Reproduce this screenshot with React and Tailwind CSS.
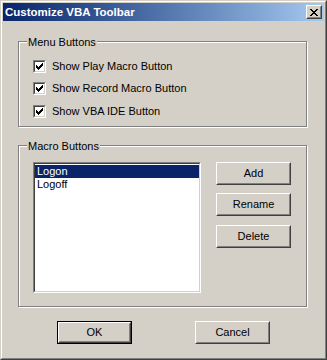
const FONT = { fontFamily: '"Liberation Sans", Arial, sans-serif' };

const CHECK = [[6], [5, 6], [0, 4, 5, 6], [0, 1, 3, 4, 5], [0, 1, 2, 3, 4], [1, 2, 3], [2]];
const CLOSE = [[0, 1, 6, 7], [1, 2, 5, 6], [2, 3, 4, 5], [3, 4], [2, 3, 4, 5], [1, 2, 5, 6], [0, 1, 6, 7]];

function Pixels({ rows, w, h }) {
  return (
    <svg width={w} height={h} viewBox={`0 0 ${w} ${h}`} shapeRendering="crispEdges">
      {rows.map((cols, y) =>
        cols.map((x) => <rect key={`${x}-${y}`} x={x} y={y} width="1" height="1" fill="#000" />)
      )}
    </svg>
  );
}

function Checkbox({ label }) {
  return (
    <div className="flex items-center h-[13px]">
      <div className="w-[13px] h-[13px] border border-t-[#808080] border-l-[#808080] border-r-white border-b-white">
        <div className="w-full h-full bg-white border border-t-[#404040] border-l-[#404040] border-r-[#d4d0c8] border-b-[#d4d0c8] flex items-center justify-center">
          <Pixels rows={CHECK} w={7} h={7} />
        </div>
      </div>
      <span className="ml-[6px] text-[11px] leading-[13px] text-black whitespace-nowrap">{label}</span>
    </div>
  );
}

function Button({ children, isDefault }) {
  return (
    <div className={`w-[75px] h-[23px] ${isDefault ? 'border border-black' : ''}`}>
      <div className="w-full h-full border border-t-white border-l-white border-r-[#404040] border-b-[#404040]">
        <div className="w-full h-full border border-t-[#d4d0c8] border-l-[#d4d0c8] border-r-[#808080] border-b-[#808080] flex items-center justify-center text-[11px] leading-[13px] text-black">
          {children}
        </div>
      </div>
    </div>
  );
}

function GroupBox({ title, className, children }) {
  return (
    <div className={`relative w-[289px] border border-[#808080] shadow-[inset_1px_1px_0_#fff,1px_1px_0_#fff] ${className}`}>
      <span className="absolute left-[8px] top-[-6px] px-[1px] bg-[#d4d0c8] text-[11px] leading-[13px] text-black whitespace-nowrap">
        {title}
      </span>
      {children}
    </div>
  );
}

export default function App() {
  const macros = ['Logon', 'Logoff'];

  return (
    <div
      className="w-[327px] h-[360px] bg-[#d4d0c8] border border-t-[#d4d0c8] border-l-[#d4d0c8] border-r-[#404040] border-b-[#404040]"
      style={FONT}
    >
      <div className="h-full border border-t-white border-l-white border-r-[#808080] border-b-[#808080] p-px flex flex-col">
        {/* title bar */}
        <div className="h-[18px] flex items-center justify-between pl-[2px] pr-[2px] bg-linear-to-r from-[#0a246a] to-[#a6caf0]">
          <span className="text-white font-bold text-[11.5px] leading-[14px] whitespace-nowrap">Customize VBA Toolbar</span>
          <div className="w-[16px] h-[14px] border border-t-white border-l-white border-r-[#404040] border-b-[#404040]">
            <div className="w-full h-full bg-[#d4d0c8] border border-t-[#d4d0c8] border-l-[#d4d0c8] border-r-[#808080] border-b-[#808080] flex items-center justify-center">
              <Pixels rows={CLOSE} w={8} h={7} />
            </div>
          </div>
        </div>

        <div className="pl-[15px] pt-[20px]">
          <GroupBox title="Menu Buttons" className="h-[86px]">
            <div className="pt-[18px] pl-[14px] flex flex-col">
              <Checkbox label="Show Play Macro Button" />
              <div className="mt-[9px]">
                <Checkbox label="Show Record Macro Button" />
              </div>
              <div className="mt-[10px]">
                <Checkbox label="Show VBA IDE Button" />
              </div>
            </div>
          </GroupBox>

          <GroupBox title="Macro Buttons" className="h-[162px] mt-[18px]">
            <div className="pt-[16px] pl-[14px] flex gap-[15px]">
              <div className="w-[168px] h-[131px] border border-t-[#808080] border-l-[#808080] border-r-white border-b-white">
                <div className="w-full h-full bg-white border border-t-[#404040] border-l-[#404040] border-r-[#d4d0c8] border-b-[#d4d0c8] pt-[1px]">
                  {macros.map((m, i) => (
                    <div
                      key={m}
                      className={`h-[13px] pl-[2px] text-[11px] leading-[13px] ${
                        i === 0 ? 'bg-[#0a246a] text-white' : 'text-black'
                      }`}
                    >
                      {m}
                    </div>
                  ))}
                </div>
              </div>
              <div className="flex flex-col">
                <Button>Add</Button>
                <div className="mt-[8px]">
                  <Button>Rename</Button>
                </div>
                <div className="mt-[9px]">
                  <Button>Delete</Button>
                </div>
              </div>
            </div>
          </GroupBox>

          <div className="mt-[14px] pl-[39px] flex gap-[63px]">
            <Button isDefault>OK</Button>
            <Button>Cancel</Button>
          </div>
        </div>
      </div>
    </div>
  );
}
